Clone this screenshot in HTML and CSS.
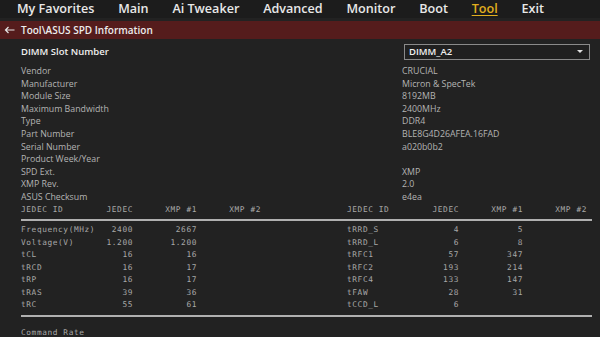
FILE: index.html
```html
<!DOCTYPE html>
<html>
<head>
<meta charset="utf-8">
<link rel="stylesheet" href="styles.css">
</head>
<body>
<nav class="nav">
  <span class="tab">My Favorites</span>
  <span class="tab">Main</span>
  <span class="tab">Ai Tweaker</span>
  <span class="tab">Advanced</span>
  <span class="tab">Monitor</span>
  <span class="tab">Boot</span>
  <span class="tab active">Tool</span>
  <span class="tab">Exit</span>
</nav>
<div class="crumb">
  <svg class="back" width="11" height="8" viewBox="0 0 11 8"><path d="M10.5 4H1.5M4.5 1L1.5 4L4.5 7" fill="none" stroke="#e6e6e6" stroke-width="1.2"/></svg>
  <span>Tool\ASUS SPD Information</span>
</div>
<main class="content">
  <div class="slot">
    <span class="slot-label">DIMM Slot Number</span>
    <div class="select"><span>DIMM_A2</span><span class="caret"></span></div>
  </div>
  <div class="info">
    <div class="row"><span>Vendor</span><span>CRUCIAL</span></div>
    <div class="row"><span>Manufacturer</span><span>Micron &amp; SpecTek</span></div>
    <div class="row"><span>Module Size</span><span>8192MB</span></div>
    <div class="row"><span>Maximum Bandwidth</span><span>2400MHz</span></div>
    <div class="row"><span>Type</span><span>DDR4</span></div>
    <div class="row"><span>Part Number</span><span>BLE8G4D26AFEA.16FAD</span></div>
    <div class="row"><span>Serial Number</span><span>a020b0b2</span></div>
    <div class="row"><span>Product Week/Year</span><span></span></div>
    <div class="row"><span>SPD Ext.</span><span>XMP</span></div>
    <div class="row"><span>XMP Rev.</span><span>2.0</span></div>
    <div class="row"><span>ASUS Checksum</span><span>e4ea</span></div>
  </div>
  <div class="table head-row">
    <div class="half">
      <span>JEDEC ID</span><span class="n">JEDEC</span><span class="n">XMP #1</span><span class="n">XMP #2</span>
    </div>
    <div class="half">
      <span>JEDEC ID</span><span class="n">JEDEC</span><span class="n">XMP #1</span><span class="n">XMP #2</span>
    </div>
  </div>
  <div class="table body-rows">
    <div class="half">
      <span>Frequency(MHz)</span><span class="n">2400</span><span class="n">2667</span><span class="n"></span>
      <span>Voltage(V)</span><span class="n">1.200</span><span class="n">1.200</span><span class="n"></span>
      <span>tCL</span><span class="n">16</span><span class="n">16</span><span class="n"></span>
      <span>tRCD</span><span class="n">16</span><span class="n">17</span><span class="n"></span>
      <span>tRP</span><span class="n">16</span><span class="n">17</span><span class="n"></span>
      <span>tRAS</span><span class="n">39</span><span class="n">36</span><span class="n"></span>
      <span>tRC</span><span class="n">55</span><span class="n">61</span><span class="n"></span>
    </div>
    <div class="half">
      <span>tRRD_S</span><span class="n">4</span><span class="n">5</span><span class="n"></span>
      <span>tRRD_L</span><span class="n">6</span><span class="n">8</span><span class="n"></span>
      <span>tRFC1</span><span class="n">57</span><span class="n">347</span><span class="n"></span>
      <span>tRFC2</span><span class="n">193</span><span class="n">214</span><span class="n"></span>
      <span>tRFC4</span><span class="n">133</span><span class="n">147</span><span class="n"></span>
      <span>tFAW</span><span class="n">28</span><span class="n">31</span><span class="n"></span>
      <span>tCCD_L</span><span class="n">6</span><span class="n"></span><span class="n"></span>
    </div>
  </div>
  <div class="cmd">Command Rate</div>
</main>
</body>
</html>
```

FILE: styles.css
```css
html, body {
  margin: 0;
  padding: 0;
  background: #222222;
  width: 600px;
  height: 337px;
  overflow: hidden;
  font-family: "Open Sans", "Liberation Sans", sans-serif;
}

.nav {
  height: 18px;
  background: #1c1c1c;
  display: flex;
  align-items: center;
  padding-left: 17px;
}
.tab {
  color: #e8e8e8;
  font-size: 12.6px;
  font-weight: 600;
  line-height: 16px;
  margin-right: 23.8px;
  white-space: nowrap;
}
.tab.active {
  color: #e0ae1e;
  text-decoration: underline;
  text-underline-offset: 2px;
  text-decoration-thickness: 1px;
}

.crumb {
  margin-top: 3px;
  height: 18px;
  background: #551c1c;
  display: flex;
  align-items: center;
  color: #ececec;
  font-size: 10px;
  font-weight: 600;
}
.back { margin: 0 6px 0 4px; }

.content {
  padding: 0 8px 0 21px;
  font-size: 8.8px;
}

.slot {
  display: flex;
  align-items: center;
  justify-content: space-between;
  height: 17px;
  margin-top: 4px;
}
.slot-label {
  color: #f0f0f0;
  font-size: 9.5px;
  font-weight: 600;
}
.select {
  width: 174px;
  height: 14px;
  border: 1px solid #8a8a8a;
  margin-right: 2px;
  background: #202020;
  display: flex;
  align-items: center;
  justify-content: space-between;
  padding: 0 6px 0 4px;
  color: #f0f0f0;
  font-size: 9.5px;
  font-weight: 600;
}
.caret {
  width: 0; height: 0;
  border-left: 3px solid transparent;
  border-right: 3px solid transparent;
  border-top: 3px solid #e0e0e0;
}

.info { margin-top: 5px; }
.row {
  display: grid;
  grid-template-columns: 381px 1fr;
  height: 12.6px;
  line-height: 12.6px;
  color: #b4b4b4;
}

.table {
  display: flex;
  gap: 86px;
  width: 571px;
  border-bottom: 2px solid #b0b0b0;
  font-family: "DejaVu Sans Mono", "Liberation Mono", monospace;
  font-size: 7.8px;
  letter-spacing: 0.6px;
  color: #a8a8a8;
}
.half {
  display: grid;
  grid-template-columns: 80px 32px 64px 64px;
  grid-auto-rows: 12.5px;
  line-height: 12.5px;
}
.n { text-align: right; }
.head-row {
  padding-bottom: 3px;
}
.body-rows {
  padding-top: 3px;
  padding-bottom: 3px;
}
.cmd {
  margin-top: 11px;
  font-family: "DejaVu Sans Mono", "Liberation Mono", monospace;
  font-size: 7.8px;
  letter-spacing: 0.6px;
  color: #a8a8a8;
}
```
